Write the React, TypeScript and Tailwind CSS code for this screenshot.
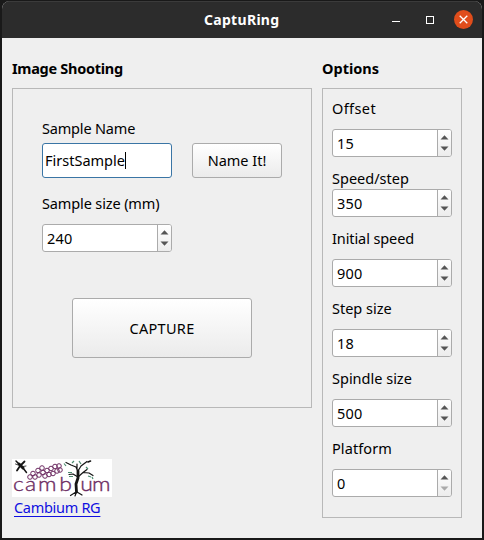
import React from "react";

function Label({ children, className = "" }: { children: React.ReactNode; className?: string }) {
  return <div className={`h-5 whitespace-nowrap text-[14.5px] leading-[18px] ${className}`}>{children}</div>;
}

function SpinBox({ value, atMinimum = false, className = "" }: { value: string; atMinimum?: boolean; className?: string }) {
  return (
    <div className={`flex h-7 shrink-0 overflow-hidden rounded-[3px] border border-[#ababab] bg-white ${className}`}>
      <div className="flex-1 pl-1 pt-0.5 text-[14.5px] leading-[22px] tracking-[0.2px]">{value}</div>
      <div className="flex w-3.5 items-center justify-center border-l border-[#ababab] bg-linear-to-b from-white to-[#ececec]">
        <svg width="9" height="16" viewBox="0 0 9 16" className="shrink-0">
          <path d="M0.5 4.5 L4.5 0.3 L8.5 4.5Z" fill="#555" />
          <path d="M0.5 11.5 L4.5 15.7 L8.5 11.5Z" fill={atMinimum ? "#aaa" : "#555"} />
        </svg>
      </div>
    </div>
  );
}

function PushButton({ children, className = "" }: { children: React.ReactNode; className?: string }) {
  return (
    <button className={`flex items-center justify-center whitespace-nowrap rounded-[3px] border border-[#ababab] bg-linear-to-b from-white to-[#ebebeb] text-[14.5px] ${className}`}>
      {children}
    </button>
  );
}

const berries = [
  [18, 18], [21, 14.5], [23, 18], [26, 11.5], [27, 16], [30, 9], [31, 13.5], [33, 17], [35, 11.5], [37, 15.5],
  [39, 9.5], [41, 14.5], [43, 7.5], [45, 12], [47, 7], [48, 11],
];

function Logo() {
  return (
    <svg width="100" height="38" viewBox="0 0 100 38" className="block bg-white" role="img" aria-label="cambium">
      {/* bee */}
      <g stroke="#151515" fill="none" strokeLinecap="round">
        <path d="M7 5 L11 9" strokeWidth="3" />
        <path d="M4 2 L7 5 M11 9 L14.5 13.5" strokeWidth="1.5" />
        <path d="M8.5 6.5 L12.5 2.5 M8 7 L5 11.5" strokeWidth="1.8" />
        <path d="M3.5 5 L6 6 M11 7.5 L14 7" strokeWidth="0.8" />
      </g>
      {/* grape cluster */}
      <g stroke="#6d2c62" strokeWidth="1" fill="none">
        {berries.map(([x, y]) => <circle key={`${x}-${y}`} cx={x} cy={y} r="2.3" />)}
      </g>
      <g transform="scale(1.15 1)" fill="#6d2c62" stroke="#6d2c62" strokeWidth="0.35" className="font-['Lato',sans-serif]">
        <text x="0.9 11.4 22.6 41.2" y="32.5" fontSize="20" fontWeight="300">camb</text>
        <text x="59.4 69.6" y="32.5" fontSize="20" fontWeight="300">um</text>
      </g>
      {/* tree */}
      <g stroke="#151515" fill="none" strokeLinecap="round" strokeLinejoin="round">
        <path d="M66 12 L66 19 L64 25 L64.5 33" strokeWidth="2.8" />
        <path d="M64 33 L58.5 36.5 M64.5 33 L63 37 M65 33 L70 36" strokeWidth="1.2" />
        <path d="M66 13 L64 8 L59 6 L54 3.5 M66 12 L69 7 L75 2.5 M66 18 L71 13.5 L77 14 L81 16.5 M66 18 L61 15 L57 15.5 M65 10 L65 5 M71 13.5 L75 10.5" strokeWidth="1.2" />
        <path d="M76 3 L78.5 2" strokeWidth="1.6" />
      </g>
      <g stroke="#4b8c70" strokeWidth="1.2" fill="none">
        <path d="M52 4.5 L54 7 M60 4 L62 2 M67 2 L69 5 M56 13.5 L60 13.5 M57 17.5 L61 17.5 M74 8 L76 10 M76 17 L79 18 M80 18 L81 20" />
      </g>
    </svg>
  );
}

export default function App() {
  return (
    <div className="h-[540px] w-[484px] bg-[#191919] px-0.5 pb-0.5 pt-px font-['Noto_Sans',sans-serif] text-black">
      <div className="flex h-[537px] flex-col overflow-hidden rounded-t-lg bg-[#efefef]">
        <header className="flex h-[37px] shrink-0 items-center border-t border-[#3b3b3b] bg-[#2c2c2c] pl-[202px] text-white">
          <h1 className="w-[188px] whitespace-nowrap text-[14px] font-bold leading-5 tracking-[0.3px]">CaptuRing</h1>
          <div className="mt-[3px] h-px w-2 bg-white" />
          <div className="mb-px ml-[26px] size-2 border border-white" />
          <div className="mb-px ml-5 flex size-[19px] items-center justify-center rounded-full bg-[#e04d1b]">
            <svg width="9" height="9" viewBox="0 0 9 9" stroke="#fff" strokeWidth="1.3">
              <path d="M0.7 0.7 L8.3 8.3 M8.3 0.7 L0.7 8.3" />
            </svg>
          </div>
        </header>
        <main className="flex gap-2.5 pl-2.5 pt-5">
          <section className="w-[300px]">
            <h2 className="h-[30px] whitespace-nowrap text-[14.5px] font-bold leading-5 tracking-[-0.28px]">Image Shooting</h2>
            <div className="h-80 border border-[#b8b8b8] pl-[29px] pt-[30px]">
              <Label className="tracking-[-0.18px]">Sample Name</Label>
              <div className="mt-1 flex gap-5">
                <div className="flex h-[35px] w-[130px] items-center rounded-[3px] border border-[#3a75a5] bg-white pl-0.5 text-[14.5px]">
                  <span>FirstSample</span><span className="h-[17px] w-px bg-black" />
                </div>
                <PushButton className="h-[35px] w-[90px]">Name It!</PushButton>
              </div>
              <Label className="mt-4 tracking-[-0.13px]">Sample size (mm)</Label>
              <SpinBox value="240" className="mt-2.5 w-[130px]" />
              <PushButton className="ml-[30px] mt-[46px] h-[60px] w-[180px] pt-0.5 tracking-[0.3px]">CAPTURE</PushButton>
            </div>
            <div className="mt-[51px]"><Logo /></div>
            <a className="ml-0.5 block w-fit whitespace-nowrap text-[14.5px] leading-5 tracking-[-0.3px] text-[#1010e0] underline underline-offset-[3px]">Cambium RG</a>
          </section>
          <section className="w-[140px]">
            <h2 className="h-[30px] text-[14.5px] font-bold leading-5">Options</h2>
            <div className="h-[430px] border border-[#b8b8b8] px-[9px] pt-2.5">
              <Label className="tracking-[0.4px]">Offset</Label><SpinBox value="15" className="mt-2.5" />
              <Label className="mt-3">Speed/step</Label><SpinBox value="350" />
              <Label className="mt-3 tracking-[-0.1px]">Initial speed</Label><SpinBox value="900" className="mt-2.5" />
              <Label className="mt-3">Step size</Label><SpinBox value="18" className="mt-2.5" />
              <Label className="mt-3">Spindle size</Label><SpinBox value="500" className="mt-2.5" />
              <Label className="mt-3 tracking-[0.1px]">Platform</Label><SpinBox value="0" atMinimum className="mt-2.5" />
            </div>
          </section>
        </main>
      </div>
    </div>
  );
}
